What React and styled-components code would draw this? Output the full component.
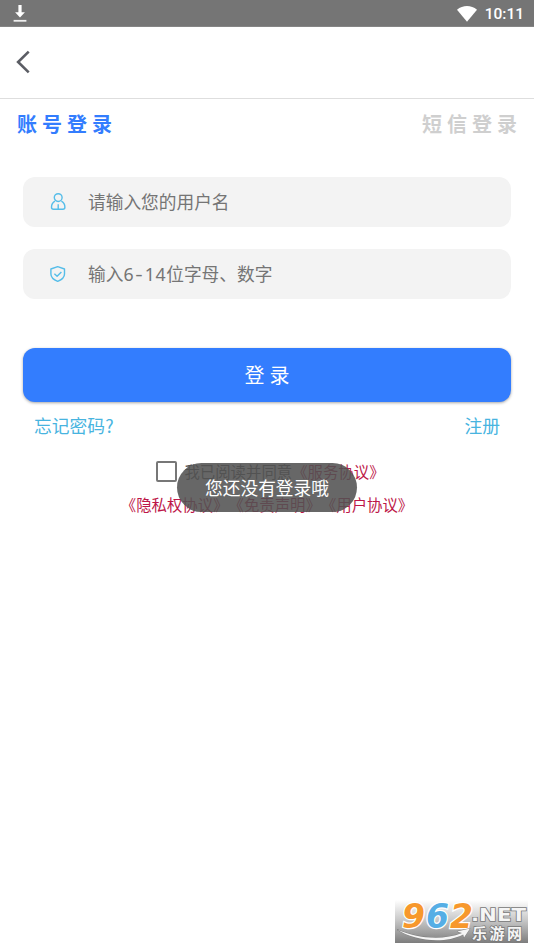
import React, { useState } from 'react'
import styled, { createGlobalStyle } from 'styled-components'

const GlobalStyle = createGlobalStyle`
*{
  box-sizing:border-box;
}
body{
  margin:0;
  background:#fff;
  font-family:"Noto Sans CJK SC", "Noto Sans", sans-serif;
}
`;

const DownloadIcon = () => (
  <svg width="14" height="18" viewBox="0 0 14 18">
    <path d="M5.4 0h3.2v7.2h3.3L7 12.4 2.1 7.2h3.3z" fill="#fff" />
    <path d="M.6 15.8h12.8" stroke="#eee" strokeWidth="1.8" />
  </svg>
)

const WifiIcon = () => (
  <svg width="20" height="16" viewBox="0 0 20 16">
    <path d="M0 3.7C5.8-1.1 14.2-1.1 20 3.7L10 15.8z" fill="#fff" />
  </svg>
)

const BackIcon = () => (
  <svg width="16" height="24" viewBox="0 0 16 24">
    <path d="M13.700 1.6 3.100 12l10.600 10.400" fill="none" stroke="#5b5d64" strokeWidth="2.6" />
  </svg>
)

const UserIcon = () => (
  <svg width="16" height="18" viewBox="0 0 16 18" fill="none" stroke="#55bde9" strokeWidth="1.4">
    <circle cx="8.2" cy="4.6" r="3.9" />
    <path d="M5 8.2C2.7 9.5 1.5 11.7 1.5 14.3c0 1.4.6 2 2 2h9.4c1.4 0 2-.6 2-2 0-2.6-1.2-4.8-3.5-6.1" />
    <path d="M8.2 11.2v5" />
  </svg>
)

const ShieldIcon = () => (
  <svg width="16" height="18" viewBox="0 0 16 18" fill="none" stroke="#55bde9" strokeWidth="1.4" strokeLinejoin="round">
    <path d="M7.7 1.7 14.5 4v5c0 3.3-2.7 5.7-6.8 7.4C3.6 14.7.9 12.3.9 9V4z" />
    <path d="M4.4 8.7l2.7 2.6 4.3-4.4" />
  </svg>
)

const App = () => {
  const [mode, setmode] = useState("account");
  const [checked, setchecked] = useState(false);

  return (
    <>
      <GlobalStyle />
      <Screen>
        <StatusBar>
          <DownloadIcon />
          <div className="right">
            <WifiIcon />
            <span>10:11</span>
          </div>
        </StatusBar>
        <Header>
          <BackIcon />
        </Header>
        <Tabs>
          <Tab $active={mode === "account"} onClick={() => setmode("account")}>账号登录</Tab>
          <Tab $active={mode === "sms"} onClick={() => setmode("sms")}>短信登录</Tab>
        </Tabs>
        <Form>
          <Field>
            <UserIcon />
            <p>请输入您的用户名</p>
          </Field>
          <Field>
            <ShieldIcon />
            <p>输入<Digits>6<i>-</i>14</Digits>位字母、数字</p>
          </Field>
          <LoginButton>登录</LoginButton>
        </Form>
        <Links>
          <span>忘记密码?</span>
          <span>注册</span>
        </Links>
        <Agreement>
          <div className="line first">
            <CheckBox $checked={checked} onClick={() => setchecked(!checked)} />
            <span>我已阅读并同意</span>
            <a>《服务协议》</a>
          </div>
          <div className="line">
            <a>《隐私权协议》</a>
            <a>《免责声明》</a>
            <a>《用户协议》</a>
          </div>
          <Toast>您还没有登录哦</Toast>
        </Agreement>
        <Watermark>
          <svg width="133" height="43" viewBox="0 0 133 43">
            <defs>
              <linearGradient id="plate" x1="0" y1="0" x2="0" y2="1">
                <stop offset="0" stopColor="#fff" />
                <stop offset=".45" stopColor="#cacaca" />
                <stop offset="1" stopColor="#7d7d7d" />
              </linearGradient>
            </defs>
            <rect width="133" height="43" fill="url(#plate)" />
            <g fontFamily="DejaVu Sans, sans-serif" fontWeight="bold" fontStyle="italic" fontSize="33" stroke="#fff" strokeWidth="2.5" paintOrder="stroke">
              <text x="7" y="28" fill="#f7982c">9</text>
              <text x="31" y="28" fill="#55aee5">6</text>
              <text x="55" y="28" fill="#f7982c">2</text>
            </g>
            <g fill="#f5f5f5" stroke="#777" strokeWidth="1.4" paintOrder="stroke" fontWeight="bold">
              <text x="76" y="21" fontFamily="DejaVu Sans, sans-serif" fontSize="17.5" textLength="55" lengthAdjust="spacingAndGlyphs">.NET</text>
              <text x="77" y="39" fontFamily="Noto Sans CJK SC, sans-serif" fontSize="15" textLength="50">乐游网</text>
              <path d="M2 29.5c18 8 44 12 65 3.5l-5-1.5 13-3-6 9-.8-3C48 45 18 40 2 29.5z" strokeWidth=".8" />
            </g>
          </svg>
        </Watermark>
      </Screen>
    </>
  )
}

const Screen = styled.div`
display:flex;
flex-direction:column;
width:534px;
height:949px;
background:#fff;
overflow:hidden;
`;

const StatusBar = styled.div`
display:flex;
justify-content:space-between;
align-items:center;
height:27px;
padding:1px 10px 0 13px;
background:#757575;
border-bottom:1px solid #858585;
.right{
  display:flex;
  align-items:center;
  gap:8px;
  color:#fff;
  font-family:Roboto, sans-serif;
  font-size:15.5px;
  font-weight:500;
}
`;

const Header = styled.div`
display:flex;
align-items:center;
height:72px;
padding:0 0 1px 15px;
border-bottom:1px solid #dedede;
`;

const Tabs = styled.div`
display:flex;
justify-content:space-between;
height:78px;
padding:10px 12px 0 17px;
`;

const Tab = styled.div`
color:${props => props.$active ? "#337dfe" : "#cfcfcf"};
font-size:20px;
font-weight:bold;
line-height:30px;
letter-spacing:5px;
`;

const Form = styled.div`
display:flex;
flex-direction:column;
padding:0 23px;
`;

const Field = styled.div`
display:flex;
align-items:center;
gap:22px;
height:50px;
margin-bottom:22px;
padding-left:27px;
border-radius:12px;
background:#f3f3f3;
p{
  margin:0;
  padding-bottom:2px;
  color:#757575;
  font-size:17.7px;
  line-height:26px;
}
`;

const Digits = styled.span`
font-family:"Noto Sans", sans-serif;
letter-spacing:0.6px;
i{
  display:inline-block;
  font-style:normal;
  padding:0 2.2px;
  transform:scaleX(1.3);
}
`;

const LoginButton = styled.button`
height:54px;
margin-top:27px;
padding:0 0 1px 5px;
border:none;
border-radius:12px;
background:#337dfe;
box-shadow:0 1px 3px rgba(0,0,0,0.35);
color:#fff;
font-family:inherit;
font-size:20px;
letter-spacing:5px;
`;

const Links = styled.div`
display:flex;
justify-content:space-between;
padding:10px 34px 0;
color:#48b4df;
font-size:17.8px;
line-height:27px;
`;

const Agreement = styled.div`
position:relative;
margin-top:19px;
color:#555;
font-size:15.4px;
.line{
  display:flex;
  justify-content:center;
  align-items:center;
  height:26px;
}
.first{
  margin-bottom:7px;
  padding-left:7px;
}
a{
  color:#bd1748;
}
`;

const CheckBox = styled.div`
width:21px;
height:21px;
margin-right:7px;
border:2px solid #777;
border-radius:2px;
background:${props => props.$checked ? "#337dfe" : "#fff"};
`;

const Toast = styled.div`
position:absolute;
top:5px;
left:177px;
width:180px;
height:49px;
border-radius:25px;
background:rgba(82,82,82,0.88);
color:#fff;
font-size:17.7px;
line-height:49px;
text-align:center;
`;

const Watermark = styled.div`
display:flex;
justify-content:flex-end;
margin-top:auto;
padding:0 6px 6px 0;
`;

export default App
